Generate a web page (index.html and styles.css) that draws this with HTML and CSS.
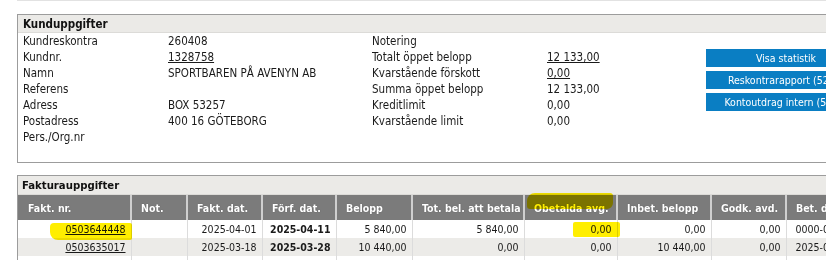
FILE: index.html
```html
<!DOCTYPE html>
<html lang="sv">
<head>
<meta charset="utf-8">
<title>Kunduppgifter</title>
<link rel="stylesheet" href="styles.css">
</head>
<body>
<div class="page">
  <div class="topline"></div>

  <section class="panel">
    <h2 class="panel-title">Kunduppgifter</h2>
    <div class="cust-body">
      <div class="info">
        <span>Kundreskontra</span><span>260408</span><span>Notering</span><span></span>
        <span>Kundnr.</span><span><a href="#">1328758</a></span><span>Totalt öppet belopp</span><span><a href="#">12 133,00</a></span>
        <span>Namn</span><span>SPORTBAREN PÅ AVENYN AB</span><span>Kvarstående förskott</span><span><a href="#">0,00</a></span>
        <span>Referens</span><span></span><span>Summa öppet belopp</span><span>12 133,00</span>
        <span>Adress</span><span>BOX 53257</span><span>Kreditlimit</span><span>0,00</span>
        <span>Postadress</span><span>400 16 GÖTEBORG</span><span>Kvarstående limit</span><span>0,00</span>
        <span>Pers./Org.nr</span><span></span><span></span><span></span>
      </div>
      <div class="actions">
        <button class="btn">Visa statistik</button>
        <button class="btn">Reskontrarapport (52 st)</button>
        <button class="btn">Kontoutdrag intern (52 st)</button>
      </div>
    </div>
  </section>

  <section class="panel invoices">
    <h2 class="panel-title tall">Fakturauppgifter</h2>
    <table class="grid">
      <colgroup>
        <col class="w113"><col class="w56"><col class="w75"><col class="w74"><col class="w76">
        <col class="w112"><col class="w93"><col class="w94"><col class="w75"><col class="w120">
      </colgroup>
      <thead>
        <tr>
          <th>Fakt. nr.</th><th>Not.</th><th>Fakt. dat.</th><th>Förf. dat.</th><th>Belopp</th>
          <th>Tot. bel. att betala</th><th>Obetalda avg.</th><th>Inbet. belopp</th><th>Godk. avd.</th><th>Bet. datum</th>
        </tr>
      </thead>
      <tbody>
        <tr>
          <td><a href="#">0503644448</a></td><td></td><td>2025-04-01</td><td class="b">2025-04-11</td><td>5 840,00</td>
          <td>5 840,00</td><td>0,00</td><td>0,00</td><td>0,00</td><td class="l">0000-00-00</td>
        </tr>
        <tr class="alt">
          <td><a href="#">0503635017</a></td><td></td><td>2025-03-18</td><td class="b">2025-03-28</td><td>10 440,00</td>
          <td>0,00</td><td>0,00</td><td>10 440,00</td><td>0,00</td><td class="l">2025-03-28</td>
        </tr>
        <tr>
          <td>&nbsp;</td><td></td><td></td><td></td><td></td><td></td><td></td><td></td><td></td><td></td>
        </tr>
      </tbody>
    </table>
  </section>

  <span class="marker mk-head"></span>
  <span class="marker mk-nr"></span>
  <span class="marker mk-avg"></span>
</div>
</body>
</html>
```

FILE: styles.css
```css
* { box-sizing: border-box; }

html, body {
  margin: 0;
  padding: 0;
  background: #fff;
}

body {
  font-family: "DejaVu Sans Condensed", "DejaVu Sans", sans-serif;
  font-size: 10.5px;
  color: #1a1a1a;
}

.page {
  position: relative;
  width: 826px;
  height: 260px;
  overflow: hidden;
  padding-left: 17px;
}

.topline {
  height: 1px;
  background: #e2e2e2;
  width: 900px;
}

.panel {
  width: 920px;
  border: 1px solid #9c9c9c;
  margin-top: 13px;
  background: #fff;
}

.panel-title {
  margin: 0;
  height: 18px;
  line-height: 18px;
  padding-left: 5px;
  font-size: 11.5px;
  font-weight: bold;
  color: #111;
  background: #ebeae7;
  border-bottom: 1px solid #dcdbd8;
}

.panel-title.tall {
  height: 19px;
  line-height: 19px;
  padding-left: 4px;
  font-size: 11.25px;
}

.cust-body {
  display: flex;
  padding: 0 0 17px 5px;
}

.info {
  display: grid;
  grid-template-columns: 145px 204px 175px 159px;
  grid-auto-rows: 16px;
  line-height: 16px;
  font-size: 11.5px;
  white-space: nowrap;
}

a {
  color: #1a1a1a;
  text-decoration: underline;
}

.actions {
  display: flex;
  flex-direction: column;
  gap: 4px;
  padding-top: 16px;
}

.btn {
  width: 160px;
  height: 18px;
  padding: 0;
  border: 0;
  background: #0a7ec3;
  color: #fff;
  font-family: inherit;
  font-size: 10.5px;
  text-align: center;
  line-height: 18px;
}

.invoices {
  margin-top: 12px;
}

.grid {
  border-collapse: collapse;
  table-layout: fixed;
  width: 888px;
  white-space: nowrap;
}

.w113 { width: 113px; }
.w56 { width: 56px; }
.w75 { width: 75px; }
.w74 { width: 74px; }
.w76 { width: 76px; }
.w112 { width: 112px; }
.w93 { width: 93px; }
.w94 { width: 94px; }
.w120 { width: 120px; }

.grid th {
  height: 25px;
  background: #7b7b7b;
  color: #fff;
  font-weight: bold;
  text-align: left;
  padding: 0 0 0 9px;
  border-left: 2px solid #cfcfcf;
  text-shadow: 0 0 1px #555;
  overflow: hidden;
}

.grid th:first-child { border-left: 0; padding-left: 10px; }

.grid td {
  height: 18px;
  text-align: right;
  padding: 0 5px 0 0;
  border-left: 1px solid #dcdcdc;
  overflow: hidden;
}

.grid td:first-child { border-left: 0; }

.grid td.l { text-align: left; padding-left: 9px; }
.grid td.b { font-weight: bold; }

.grid tr.alt td { background: #ecebe8; }

.marker {
  position: absolute;
  background: #ffee00;
  mix-blend-mode: multiply;
  border-radius: 3px;
}

.mk-head {
  left: 527px;
  top: 193px;
  width: 86px;
  height: 16px;
  border-radius: 8px 3px 6px 3px;
}

.mk-nr {
  left: 50px;
  top: 223px;
  width: 82px;
  height: 17px;
  border-radius: 4px 2px 2px 8px;
}

.mk-avg {
  left: 573px;
  top: 222px;
  width: 47px;
  height: 15px;
  border-radius: 2px;
}
```
